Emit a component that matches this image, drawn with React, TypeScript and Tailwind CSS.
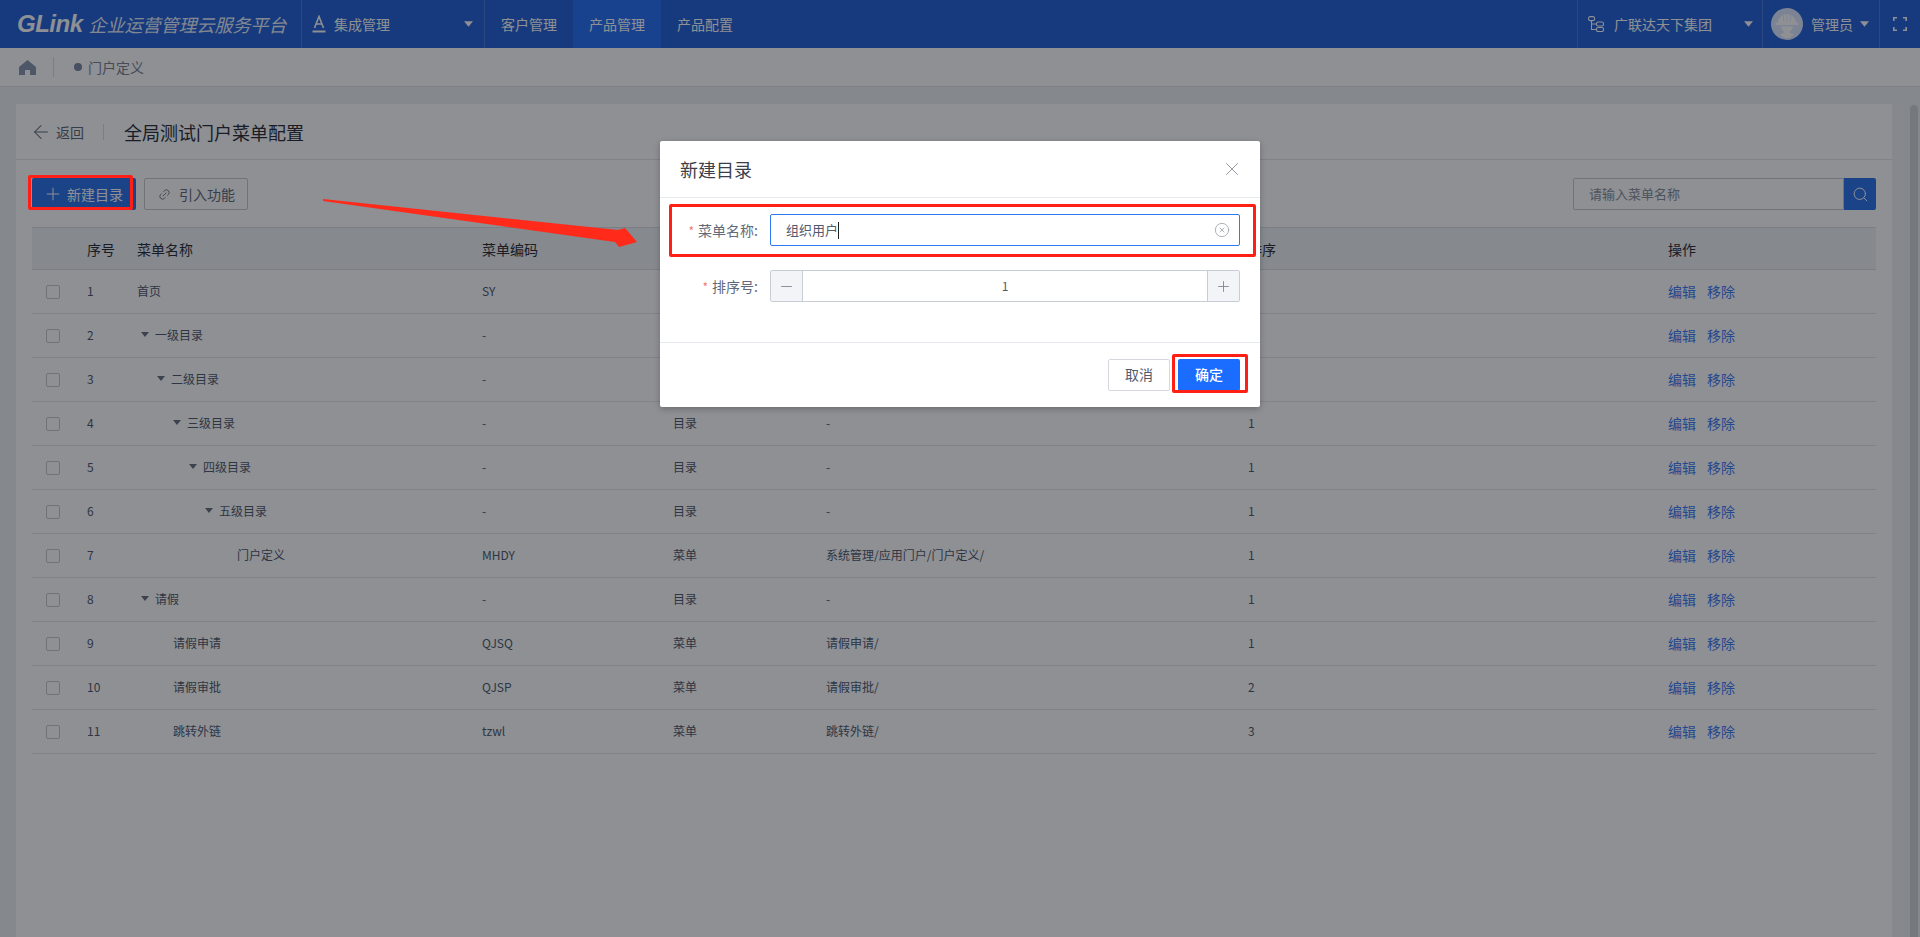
import { ArrowLeft, CircleX, Link2, Minus, Plus, Search, X } from "lucide-react";

interface MenuRow {
  no: number;
  name: string;
  indent: string;
  caret: boolean;
  code: string;
  type: string;
  path: string;
  sort: number;
}

const ROWS: MenuRow[] = [
  { no: 1, name: "首页", indent: "pl-0", caret: false, code: "SY", type: "菜单", path: "首页/", sort: 1 },
  { no: 2, name: "一级目录", indent: "pl-[4px]", caret: true, code: "-", type: "目录", path: "-", sort: 1 },
  { no: 3, name: "二级目录", indent: "pl-[20px]", caret: true, code: "-", type: "目录", path: "-", sort: 1 },
  { no: 4, name: "三级目录", indent: "pl-[36px]", caret: true, code: "-", type: "目录", path: "-", sort: 1 },
  { no: 5, name: "四级目录", indent: "pl-[52px]", caret: true, code: "-", type: "目录", path: "-", sort: 1 },
  { no: 6, name: "五级目录", indent: "pl-[68px]", caret: true, code: "-", type: "目录", path: "-", sort: 1 },
  { no: 7, name: "门户定义", indent: "pl-[100px]", caret: false, code: "MHDY", type: "菜单", path: "系统管理/应用门户/门户定义/", sort: 1 },
  { no: 8, name: "请假", indent: "pl-[4px]", caret: true, code: "-", type: "目录", path: "-", sort: 1 },
  { no: 9, name: "请假申请", indent: "pl-[36px]", caret: false, code: "QJSQ", type: "菜单", path: "请假申请/", sort: 1 },
  { no: 10, name: "请假审批", indent: "pl-[36px]", caret: false, code: "QJSP", type: "菜单", path: "请假审批/", sort: 2 },
  { no: 11, name: "跳转外链", indent: "pl-[36px]", caret: false, code: "tzwl", type: "菜单", path: "跳转外链/", sort: 3 },
];

const COLS = "grid grid-cols-[55px_50px_345px_191px_153px_422px_420px_1fr] items-center";

function Caret({ className }: { className: string }) {
  return (
    <svg viewBox="0 0 10 6" className={className} fill="currentColor">
      <path d="M0 0h10L5 6z" />
    </svg>
  );
}

function TopBar() {
  return (
    <header className="flex h-12 items-stretch bg-[#2563d5] text-white">
      <div className="flex w-[302px] items-center border-r border-[#4a7fe0] pl-[17px]">
        <span className="font-['Liberation_Sans',sans-serif] text-[24px] font-bold italic leading-none tracking-[-0.5px]">
          GLink
        </span>
        <span className="ml-[6px] text-[18px] italic leading-none opacity-90">企业运营管理云服务平台</span>
      </div>
      <div className="flex w-[183px] items-center border-r border-[#4a7fe0] pl-[10px] text-sm">
        <svg viewBox="0 0 14 18" className="h-[18px] w-[14px]" fill="none" stroke="currentColor" strokeWidth="1.6">
          <path d="M2.500 13 7 1.500 11.500 13M4.500 9h5" />
          <path d="M0.500 16.500h13" strokeWidth="2" />
        </svg>
        <span className="ml-[8px]">集成管理</span>
        <Caret className="ml-[74px] h-[6px] w-[9px]" />
      </div>
      <nav className="flex text-sm">
        <a className="flex w-[88px] items-center justify-center">客户管理</a>
        <a className="flex w-[88px] items-center justify-center bg-[#2a71f5]">产品管理</a>
        <a className="flex w-[88px] items-center justify-center">产品配置</a>
      </nav>
      <div className="ml-auto flex items-stretch text-sm">
        <div className="flex w-[186px] items-center border-x border-[#4a7fe0] pl-[10px]">
          <svg viewBox="0 0 16 16" className="h-4 w-4" fill="none" stroke="currentColor" strokeWidth="1.1">
            <rect x="0.600" y="0.600" width="6" height="4" rx="1.600" />
            <rect x="8.500" y="6" width="7" height="4" rx="1.600" />
            <rect x="8.500" y="11.500" width="7" height="4" rx="1.600" />
            <path d="M3.500 4.600v8.900h5M3.500 8h5" />
          </svg>
          <span className="ml-[10px]">广联达天下集团</span>
          <Caret className="ml-[32px] h-[6px] w-[9px]" />
        </div>
        <div className="flex w-[117px] items-center border-r border-[#4a7fe0] pl-[8px]">
          <svg viewBox="0 0 32 32" className="h-8 w-8 shrink-0">
            <circle cx="16" cy="16" r="16" fill="#dce8ff" />
            <path d="M7 15c0-5 4-9 9-9s9 4 9 9z" fill="#ffffff" />
            <path d="M12.500 7v6M16 6v7M19.500 7v6" stroke="#dce8ff" strokeWidth="0.8" />
            <path d="M4.500 14.500h23v2.500h-23z" fill="#ffffff" />
            <path d="M10 18.500h12c-.5 3-2 4.500-3.500 5.200.5 1.500 2.500 2.300 4 2.800-1.500 2.500-4 3.800-6.500 3.800s-5-1.300-6.500-3.800c1.500-.5 3.500-1.300 4-2.800C11.900 23 10.500 21.500 10 18.500z" fill="#ffffff" />
          </svg>
          <span className="ml-[8px]">管理员</span>
          <Caret className="ml-[7px] h-[6px] w-[9px]" />
        </div>
        <div className="flex w-[40px] items-center pl-[13px]">
          <svg viewBox="0 0 14 14" className="h-[14px] w-[14px]" fill="none" stroke="currentColor" strokeWidth="1.6">
            <path d="M.8 4V.8H4M10 .8h3.200V4M13.200 10v3.200H10M4 13.200H.8V10" />
          </svg>
        </div>
      </div>
    </header>
  );
}

function Breadcrumb() {
  return (
    <div className="flex h-[39px] items-center border-b border-[#dfe1e4] bg-white pl-[19px] text-[#7a8290]">
      <svg viewBox="0 0 17 15" className="h-[15px] w-[17px]" fill="#8b98ae">
        <path d="M8.500 0 17 7v8h-6v-5H6v5H0V7z" />
      </svg>
      <span className="ml-[17px] h-5 w-px bg-[#dcdee2]" />
      <span className="ml-[20px] h-2 w-2 rounded-full bg-[#7c8aa2]" />
      <span className="ml-[6px] text-sm">门户定义</span>
    </div>
  );
}

function MenuTable() {
  return (
    <div className="mt-[17px]">
      <div className={`${COLS} h-[43px] border-y border-[#dde0e4] bg-[#f0f2f5] text-sm text-[#2c2f36]`}>
        <span />
        <span>序号</span>
        <span>菜单名称</span>
        <span>菜单编码</span>
        <span>类型</span>
        <span>路径</span>
        <span>排序</span>
        <span>操作</span>
      </div>
      {ROWS.map((row) => (
        <div key={row.no} className={`${COLS} h-11 border-b border-[#e3e5e8] pb-[2px] text-xs text-[#515a6e]`}>
          <span className="pl-[14px] pt-[2px]">
            <span className="block h-[14px] w-[14px] rounded-[2px] border border-[#c5c8ce] bg-white" />
          </span>
          <span>{row.no}</span>
          <span className={`flex items-center ${row.indent}`}>
            {row.caret && <Caret className="mr-[6px] h-[5px] w-2 text-[#6b7280]" />}
            {row.name}
          </span>
          <span>{row.code}</span>
          <span>{row.type}</span>
          <span>{row.path}</span>
          <span>{row.sort}</span>
          <span className="flex gap-[11px] text-sm text-[#3f7cf5]">
            <a>编辑</a>
            <a>移除</a>
          </span>
        </div>
      ))}
    </div>
  );
}

function Page() {
  return (
    <div className="flex min-h-0 flex-1 bg-[#eff0f0] pt-[17px]">
      <div className="ml-4 w-[1876px] bg-white">
        <div className="flex h-14 items-center border-b border-[#e3e5e8] pl-[14px]">
          <ArrowLeft className="h-[22px] w-[22px] text-[#606a78]" strokeWidth={1.1} />
          <span className="ml-[4px] text-sm text-[#606a78]">返回</span>
          <span className="ml-[19px] h-4 w-px bg-[#dcdee2]" />
          <h1 className="ml-[20px] text-lg font-normal text-[#2c2f36]">全局测试门户菜单配置</h1>
        </div>
        <div className="px-4 pt-[18px]">
          <div className="flex h-8 items-stretch">
            <button className="flex w-[104px] items-center rounded-[2px] bg-[#2f73ea] pl-[11px] text-sm text-white">
              <Plus className="h-5 w-5" strokeWidth={1.2} />
              <span className="ml-[4px]">新建目录</span>
            </button>
            <button className="ml-2 flex w-[104px] items-center rounded-[2px] border border-[#c8cbd0] pl-[13px] text-sm text-[#606a78]">
              <Link2 className="h-[13px] w-[13px] -rotate-45" strokeWidth={1.5} />
              <span className="ml-[8px]">引入功能</span>
            </button>
            <div className="ml-auto flex w-[303px] items-stretch">
              <div className="flex flex-1 items-center rounded-l-[2px] border border-[#c8cbd0] pl-[15px] text-[13px] text-[#8a8f99]">
                请输入菜单名称
              </div>
              <button className="flex w-8 items-center justify-center rounded-r-[2px] bg-[#2f73ea] text-white">
                <Search className="h-[17px] w-[17px]" strokeWidth={1.4} />
              </button>
            </div>
          </div>
          <MenuTable />
        </div>
      </div>
      <div className="ml-4 flex w-3 justify-center pt-px">
        <div className="h-full w-2 rounded-t-[4px] bg-[#d2d5d8]" />
      </div>
    </div>
  );
}

function Dialog() {
  return (
    <div className="absolute inset-0 flex justify-center bg-[rgba(4,8,18,0.45)] pt-[141px]">
      <div className="h-[266px] w-[600px] rounded-[2px] bg-white shadow-[0_2px_6px_rgba(0,0,0,0.25)]">
        <div className="flex h-[57px] items-center justify-between border-b border-[#e6e9ee] pl-5 pr-[17px]">
          <h2 className="text-lg font-normal text-[#3a3f4a]">新建目录</h2>
          <X className="h-[22px] w-[22px] text-[#8a8f99]" strokeWidth={1} />
        </div>
        <div className="h-[145px] border-b border-[#e6e9ee] pl-[110px] pr-5 pt-4">
          <div className="relative flex h-8 items-center rounded-[2px] border border-[#2d7bf4] pl-[15px] pr-[9px] text-[13px] text-[#515a6e]">
            <label className="absolute right-full mr-[13px] whitespace-nowrap text-sm text-[#606a78]">
              <span className="mr-1 text-xs text-[#f27a7a]">*</span>菜单名称:
            </label>
            <span>组织用户</span>
            <span className="h-[17px] w-px bg-[#222]" />
            <CircleX className="ml-auto h-4 w-4 text-[#9aa0aa]" strokeWidth={1.2} />
          </div>
          <div className="relative mt-6 flex h-8 items-stretch rounded-[2px] border border-[#c8ccd4] text-sm text-[#515a6e]">
            <label className="absolute right-full top-[5px] mr-[13px] whitespace-nowrap text-sm text-[#606a78]">
              <span className="mr-1 text-xs text-[#f27a7a]">*</span>排序号:
            </label>
            <span className="flex w-[32px] items-center justify-center border-r border-[#c8ccd4] bg-[#f3f4f8]">
              <Minus className="h-[17px] w-[17px] text-[#7a808c]" strokeWidth={1.2} />
            </span>
            <span className="flex flex-1 items-center justify-center text-xs">1</span>
            <span className="flex w-8 items-center justify-center border-l border-[#c8ccd4] bg-[#f3f4f8]">
              <Plus className="h-[17px] w-[17px] text-[#7a808c]" strokeWidth={1.2} />
            </span>
          </div>
        </div>
        <div className="flex justify-end gap-2 pr-5 pt-4">
          <button className="h-8 w-[62px] rounded-[2px] border border-[#d5d8de] pb-[2px] text-sm text-[#515a6e]">取消</button>
          <button className="h-8 w-[62px] rounded-[2px] bg-[#1a6dff] pb-[2px] text-sm font-medium text-white">确定</button>
        </div>
      </div>
    </div>
  );
}

// red marks drawn over the screenshot
function Annotations() {
  return (
    <>
      <div className="absolute left-[28px] top-[175px] h-[35px] w-[105px] rounded-[2px] border-[3px] border-[#ff1f14]" />
      <div className="absolute left-[669px] top-[204px] h-[53px] w-[587px] rounded-[2px] border-[3px] border-[#ff1f14]" />
      <div className="absolute left-[1172px] top-[354px] h-[39px] w-[76px] rounded-[2px] border-[3px] border-[#ff1f14]" />
      <svg className="absolute left-0 top-0 h-[937px] w-[1920px]" viewBox="0 0 1920 937">
        <polygon points="323,199 618,230 625,228 637,242 619,247 615,242 323,201" fill="#ff2a1a" />
      </svg>
    </>
  );
}

export default function App() {
  return (
    <div className="relative flex h-screen flex-col overflow-hidden font-['Noto_Sans_CJK_SC','Liberation_Sans',sans-serif]">
      <TopBar />
      <Breadcrumb />
      <Page />
      <Dialog />
      <Annotations />
    </div>
  );
}
